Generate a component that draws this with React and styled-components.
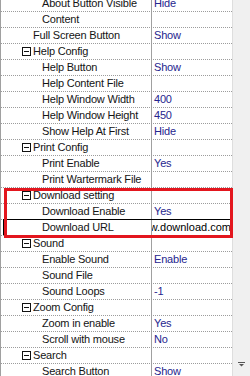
import React from 'react';
import styled, { createGlobalStyle, css } from 'styled-components';

const GlobalStyle = createGlobalStyle`
  html, body {
    margin: 0;
    padding: 0;
    background: #ffffff;
  }
  body {
    font-family: 'Liberation Sans', Arial, sans-serif;
  }
`;

const Page = styled.div`
  position: relative;
  width: 250px;
  height: 376px;
  display: flex;
  overflow: hidden;
  background: #ffffff;
`;

const Grid = styled.div`
  width: 232px;
  height: 376px;
  border-left: 1px solid #a0a0a0;
  box-sizing: border-box;
  overflow: hidden;
  background: #ffffff;
`;

// list is scrolled a few pixels past its top
const List = styled.div`
  display: flex;
  flex-direction: column;
  margin-top: -4px;
`;

const Row = styled.div`
  position: relative;
  display: flex;
  height: 16px;
  box-sizing: border-box;
  padding-bottom: 1px;
  background: repeating-linear-gradient(to right, #9c9c9c 0 1px, transparent 1px 2px) left bottom / 100% 1px no-repeat;
  font-size: 11px;
  letter-spacing: -0.2px;
  line-height: 15px;
  color: #141414;

  ${p => p.$selected && css`
    &::before {
      content: '';
      position: absolute;
      left: 2px;
      right: 0;
      top: -1px;
      height: 1px;
      background: #000;
    }
    &::after {
      content: '';
      position: absolute;
      left: 2px;
      top: -1px;
      width: 1px;
      height: 16px;
      background: #000;
    }
  `}
`;

const NameCell = styled.div`
  width: 151px;
  flex: none;
  box-sizing: border-box;
  border-right: 1px solid #a0a0a0;
  padding-left: ${p => p.$indent}px;
  display: flex;
  align-items: center;
  white-space: nowrap;
  overflow: hidden;
`;

const ValueCell = styled.div`
  flex: 1;
  min-width: 0;
  padding-left: 2px;
  display: flex;
  align-items: center;
  white-space: nowrap;
  overflow: hidden;
  color: #25258e;

  ${p => p.$editing && css`
    justify-content: flex-end;
    padding-left: 0;
    padding-right: 1px;
    color: #000;
    letter-spacing: 0;
  `}
`;

const Toggle = styled.span`
  position: relative;
  width: 9px;
  height: 9px;
  box-sizing: border-box;
  border: 1px solid #111;
  background: #fff;
  margin-right: 2px;
  flex: none;

  &::after {
    content: '';
    position: absolute;
    left: 1px;
    top: 3px;
    width: 5px;
    height: 1px;
    background: #111;
  }
`;

const ScrollBar = styled.div`
  width: 18px;
  height: 376px;
  box-sizing: border-box;
  background: #f0f0f0;
  border-left: 1px solid #dedede;
  display: flex;
  flex-direction: column;
  justify-content: flex-end;
  align-items: center;
  padding-bottom: 9px;
`;

const Highlight = styled.div`
  position: absolute;
  left: 4px;
  top: 188px;
  width: 229px;
  height: 50px;
  box-sizing: border-box;
  border: 3px solid #e3161e;
  pointer-events: none;
`;

const rows = [
  { name: 'About Button Visible', value: 'Hide', indent: 41 },
  { name: 'Content', value: '', indent: 41 },
  { name: 'Full Screen Button', value: 'Show', indent: 32 },
  { name: 'Help Config', group: true },
  { name: 'Help Button', value: 'Show', indent: 41 },
  { name: 'Help Content File', value: '', indent: 41 },
  { name: 'Help Window Width', value: '400', indent: 41 },
  { name: 'Help Window Height', value: '450', indent: 41 },
  { name: 'Show Help At First', value: 'Hide', indent: 41 },
  { name: 'Print Config', group: true },
  { name: 'Print Enable', value: 'Yes', indent: 41 },
  { name: 'Print Wartermark File', value: '', indent: 41 },
  { name: 'Download setting', group: true },
  { name: 'Download Enable', value: 'Yes', indent: 41 },
  { name: 'Download URL', value: 'www.download.com', indent: 41, selected: true },
  { name: 'Sound', group: true },
  { name: 'Enable Sound', value: 'Enable', indent: 41 },
  { name: 'Sound File', value: '', indent: 41 },
  { name: 'Sound Loops', value: '-1', indent: 41 },
  { name: 'Zoom Config', group: true },
  { name: 'Zoom in enable', value: 'Yes', indent: 41 },
  { name: 'Scroll with mouse', value: 'No', indent: 41 },
  { name: 'Search', group: true },
  { name: 'Search Button', value: 'Show', indent: 41 },
];

const DownArrow = () => (
  <svg width="7" height="5" viewBox="0 0 7 5">
    <rect x="0" y="0" width="7" height="1" fill="#555" />
    <path d="M1 2 H6 L3.5 4.6 Z" fill="#555" />
  </svg>
);

export default function App() {
  return (
    <Page>
      <GlobalStyle />
      <Grid>
        <List>
          {rows.map(r => (
            <Row key={r.name} $selected={r.selected}>
              <NameCell $indent={r.group ? 21 : r.indent}>
                {r.group && <Toggle />}
                {r.name}
              </NameCell>
              <ValueCell $editing={r.selected}>{r.value}</ValueCell>
            </Row>
          ))}
        </List>
      </Grid>
      <ScrollBar>
        <DownArrow />
      </ScrollBar>
      <Highlight />
    </Page>
  );
}
